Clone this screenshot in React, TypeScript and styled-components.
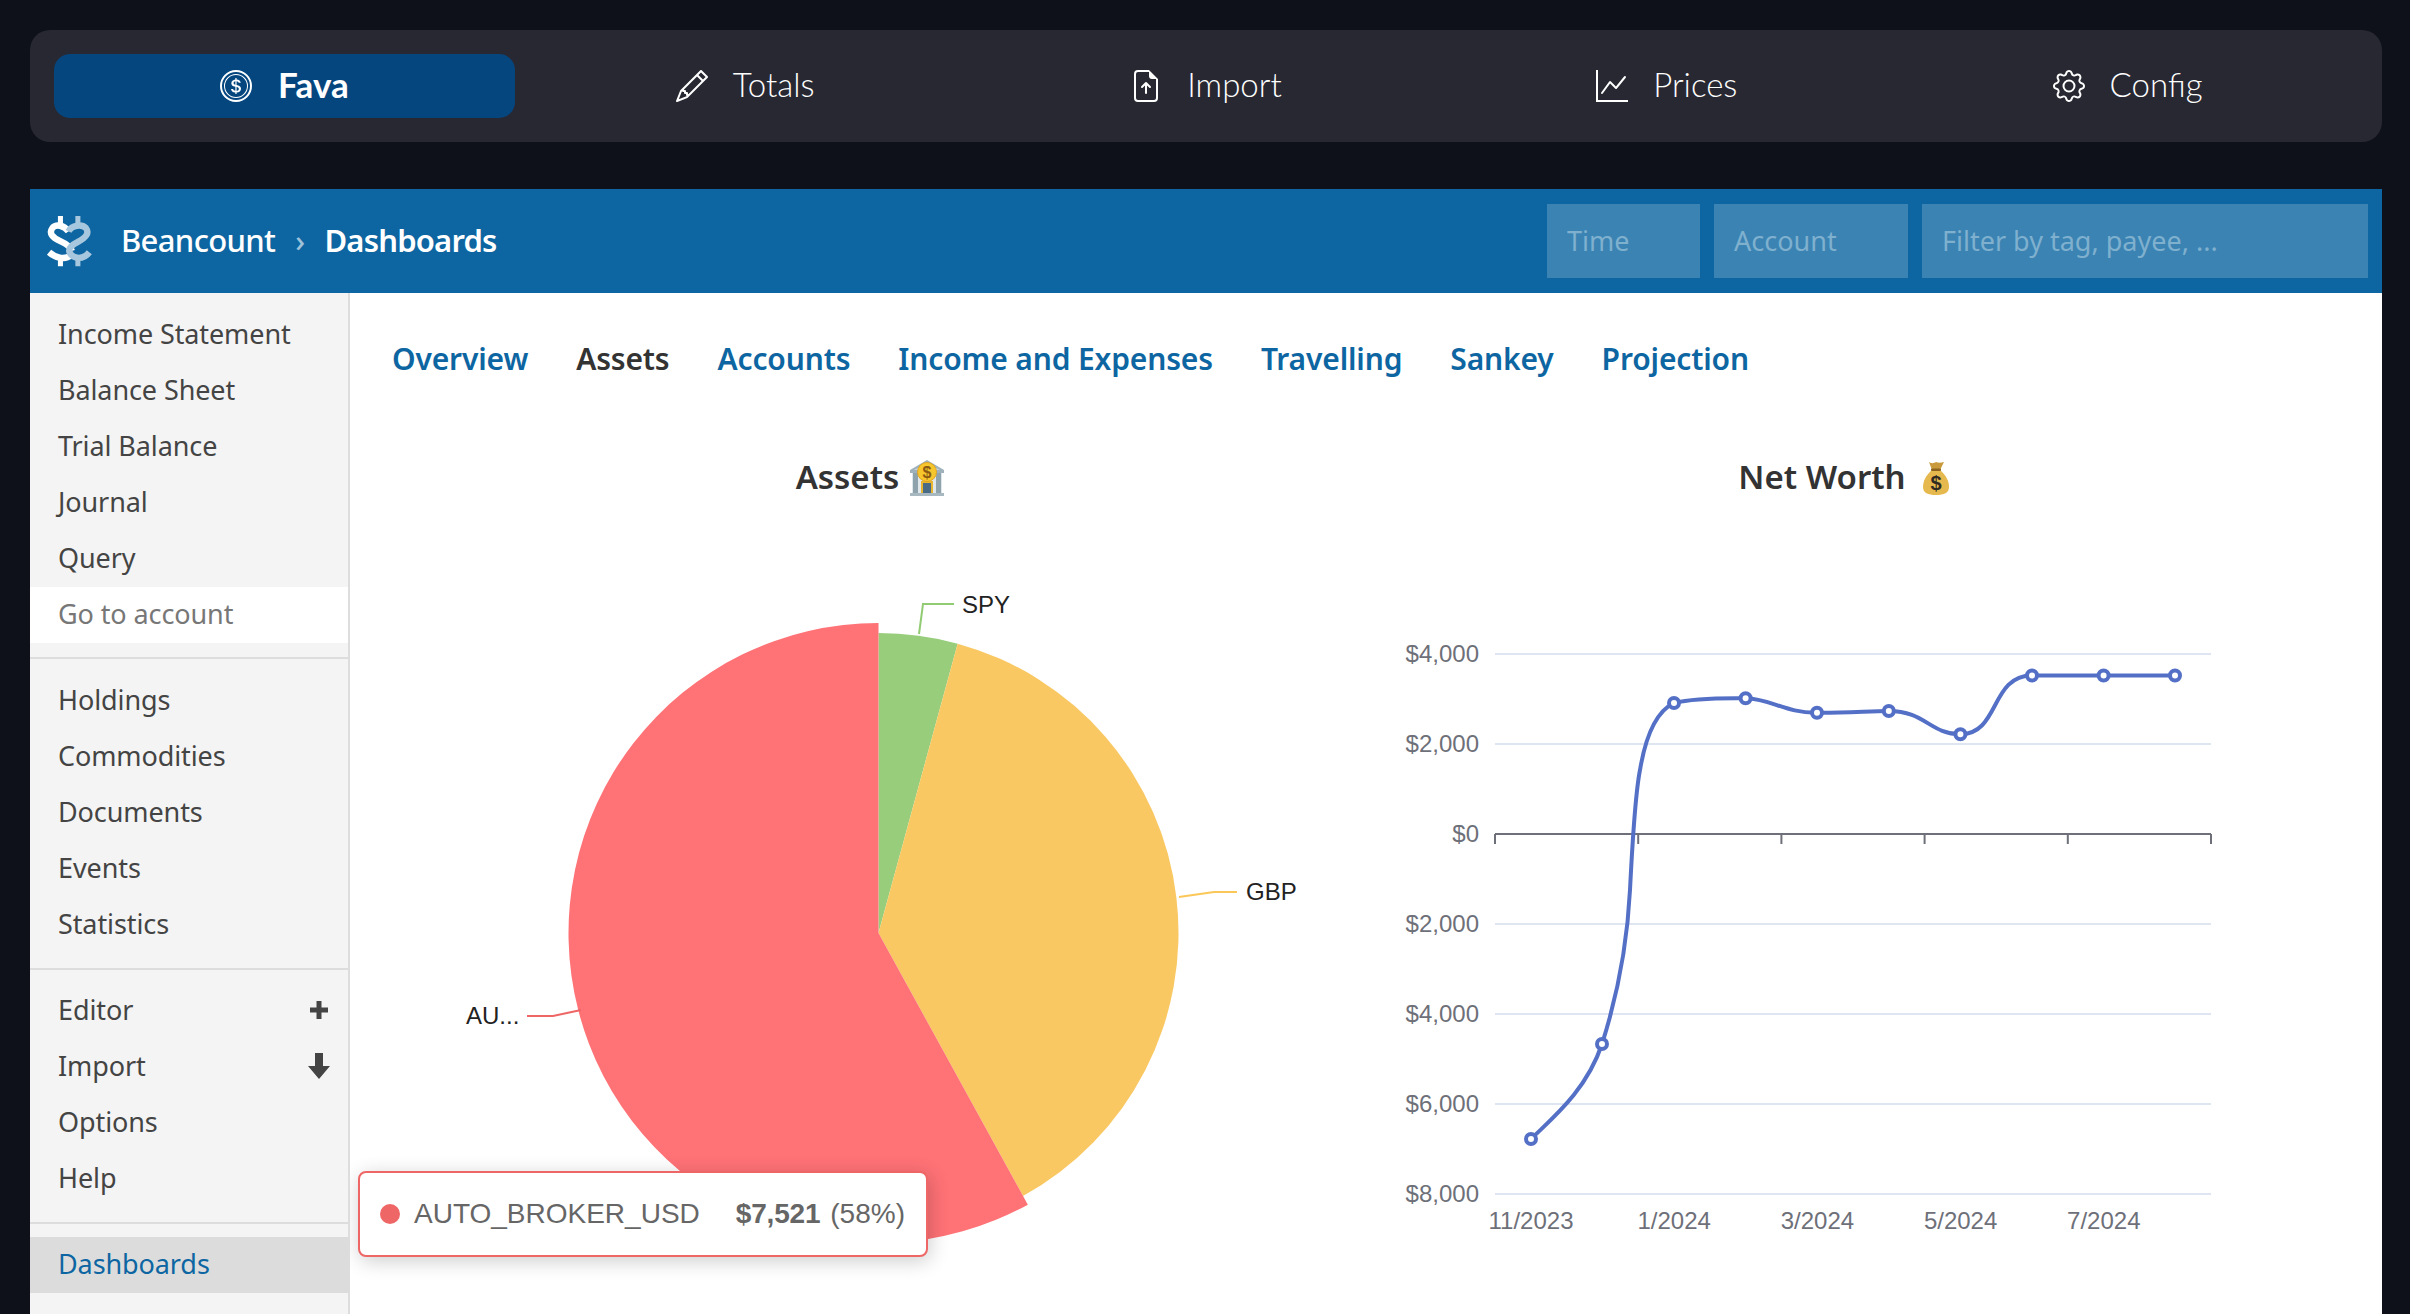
import { FC } from "react";
import styled, { createGlobalStyle } from "styled-components";
import { BsCoin, BsPencil, BsFileEarmarkArrowUp, BsGraphUp, BsGear } from "react-icons/bs";

const UI_FONT = '"Noto Sans", "Open Sans", sans-serif';
const CHART_FONT = '"Liberation Sans", Arial, sans-serif';
const BLUE = "#0d66a2";

const GlobalStyle = createGlobalStyle`
  html, body {
    margin: 0;
    height: 100%;
    overflow: hidden;
    background: #0e1119;
  }
  #root {
    height: 100%;
  }
`;

const Page = styled.div`
  height: 1314px;
  padding: 30px 28px 0 30px;
  box-sizing: border-box;
  display: flex;
  flex-direction: column;
  overflow: hidden;
`;

const TopNav = styled.nav`
  display: grid;
  grid-template-columns: repeat(5, 1fr);
  padding: 24px;
  height: 112px;
  box-sizing: border-box;
  background: #282832;
  border-radius: 20px;
  flex: none;
`;

const NavItem = styled.div<{ $active?: boolean }>`
  display: flex;
  align-items: center;
  justify-content: center;
  gap: ${(props) => (props.$active ? "26px" : "25px")};
  height: 64px;
  border-radius: 16px;
  color: #fff;
  font-family: Lato, sans-serif;
  font-size: ${(props) => (props.$active ? "35px" : "33px")};
  font-weight: ${(props) => (props.$active ? 700 : 300)};
  background: ${(props) => (props.$active ? "#05467f" : "transparent")};
  > span {
    position: relative;
    top: -2px;
  }
  > svg {
    width: 32px;
    height: 32px;
    flex: none;
  }
`;

const Shell = styled.div`
  margin-top: 47px;
  flex: 1;
  display: flex;
  flex-direction: column;
  min-height: 0;
  background: #fff;
`;

const Banner = styled.header`
  height: 104px;
  flex: none;
  display: flex;
  align-items: center;
  padding: 0 14px 0 16px;
  background: ${BLUE};
  font-family: ${UI_FONT};
  color: #fff;
`;

const Crumbs = styled.div`
  display: flex;
  align-items: center;
  margin-left: 28px;
  padding-bottom: 2px;
  font-size: 31px;
  font-weight: 500;
  letter-spacing: -0.65px;
  flex: 1;
`;

const Chevron = styled.span`
  margin: 0 20px;
  color: #9fc2da;
  font-size: 30px;
`;

const CurrentCrumb = styled.span`
  font-weight: 600;
  letter-spacing: -0.8px;
`;

const FilterBox = styled.div<{ $width: number }>`
  width: ${(props) => props.$width}px;
  height: 74px;
  margin-left: 14px;
  padding: 0 0 2px 20px;
  box-sizing: border-box;
  display: flex;
  align-items: center;
  background: #3b83b3;
  color: #7fb0ce;
  font-size: 27px;
`;

const Body = styled.div`
  flex: 1;
  display: flex;
  min-height: 0;
`;

const Sidebar = styled.aside`
  width: 320px;
  flex: none;
  box-sizing: border-box;
  background: #f4f4f4;
  border-right: 2px solid #ddd;
  font-family: ${UI_FONT};
  font-size: 27px;
  color: #444;
`;

const SideGroup = styled.ul<{ $top: number; $bottom: number }>`
  margin: 0;
  list-style: none;
  padding: ${(props) => props.$top}px 0 ${(props) => props.$bottom}px;
  border-bottom: 2px solid #ddd;
  &:last-child {
    border-bottom: none;
  }
`;

const SideRow = styled.li<{ $variant?: "input" | "current" }>`
  height: 56px;
  box-sizing: border-box;
  display: flex;
  align-items: center;
  justify-content: space-between;
  padding: 0 16px 4px 28px;
  letter-spacing: -0.1px;
  background: ${(props) =>
    props.$variant === "input" ? "#fff" : props.$variant === "current" ? "#dcdcdc" : "transparent"};
  color: ${(props) =>
    props.$variant === "input" ? "#777" : props.$variant === "current" ? BLUE : "inherit"};
  margin-right: ${(props) => (props.$variant === "current" ? "-2px" : "0")};
`;

const RowIcon = styled.svg`
  width: 26px;
  height: 30px;
  fill: #444;
  flex: none;
  position: relative;
  top: 1px;
`;

const Content = styled.main`
  flex: 1;
  min-width: 0;
  padding: 45px 0 0 34px;
  overflow: hidden;
`;

const Tabs = styled.div`
  display: flex;
  gap: 48px;
  height: 40px;
  align-items: center;
  padding-left: 8px;
  font-family: ${UI_FONT};
  font-size: 30px;
  font-weight: 600;
  letter-spacing: -0.15px;
`;

const Tab = styled.a<{ $active?: boolean }>`
  color: ${(props) => (props.$active ? "#333" : BLUE)};
`;

const Charts = styled.div`
  display: grid;
  grid-template-columns: 973px 973px;
  margin-top: 78px;
`;

const ChartPanel = styled.section`
  position: relative;
`;

const ChartTitle = styled.h3`
  margin: 0;
  height: 40px;
  display: flex;
  align-items: center;
  justify-content: center;
  font-family: ${UI_FONT};
  font-size: 33px;
  font-weight: 600;
  color: #333;
`;

const TitleEmoji = styled.svg<{ $gap: number }>`
  margin-left: ${(props) => props.$gap}px;
  flex: none;
  position: relative;
  top: 2px;
`;

const ChartCanvas = styled.svg`
  display: block;
  margin-top: 34px;
  width: 973px;
  height: 784px;
  font-family: ${CHART_FONT};
  font-size: 24px;
`;

const Tooltip = styled.div`
  position: absolute;
  left: -26px;
  top: 715px;
  width: 570px;
  height: 86px;
  box-sizing: border-box;
  display: flex;
  align-items: center;
  padding: 0 21px 0 20px;
  background: #fff;
  border: 2px solid #ee6666;
  border-radius: 8px;
  box-shadow: 2px 4px 20px rgba(0, 0, 0, 0.2);
  font-family: ${CHART_FONT};
  font-size: 28px;
  color: #666;
`;

const TooltipDot = styled.span`
  width: 20px;
  height: 20px;
  border-radius: 50%;
  background: #ee6666;
  margin-right: 14px;
  flex: none;
`;

const TooltipName = styled.span`
  flex: 1;
`;

const TooltipValue = styled.b`
  margin-right: 10px;
  letter-spacing: -0.2px;
`;

const polar = (r: number, deg: number) => {
  const a = (deg * Math.PI) / 180;
  return [878.5 + r * Math.sin(a), 933 - r * Math.cos(a)];
};

const slice = (r: number, from: number, to: number) => {
  const [x1, y1] = polar(r, from);
  const [x2, y2] = polar(r, to);
  return `M878.5 933L${x1} ${y1}A${r} ${r} 0 ${to - from > 180 ? 1 : 0} 1 ${x2} ${y2}Z`;
};

const Logo: FC = () => (
  <svg width="47" height="52" viewBox="75 75 140 155" fill="none" strokeWidth="19">
    <g stroke="#fff">
      <path strokeWidth="15" d="M118 78V104M118 206V228" />
      <path d="M142 124C128 104 104 102 94 114C82 130 96 143 116 152C134 160 148 168 152 182" />
      <path d="M84 186C100 200 130 212 150 194" />
    </g>
    <g stroke="#a6c7dd">
      <path strokeWidth="15" d="M170 78V104M170 206V228" />
      <path d="M142 124C152 104 182 102 194 114C206 130 192 143 170 155C150 165 140 176 146 188C156 206 186 210 204 186" />
    </g>
  </svg>
);

const BankEmoji: FC = () => (
  <TitleEmoji $gap={10} width="36" height="38" viewBox="0 0 36 38">
    <path d="M1 11L18 1L35 11V14H1Z" fill="#9fb1bb" />
    <path d="M5 11L18 4L31 11Z" fill="#c9d6dc" />
    <rect x="3" y="14" width="30" height="20" fill="#dfe7ea" />
    <g fill="#8fa3ad">
      <rect x="4" y="14" width="5" height="20" />
      <rect x="27" y="14" width="5" height="20" />
    </g>
    <rect x="12" y="22" width="12" height="12" fill="#e8b52f" />
    <rect x="14" y="24" width="8" height="10" fill="#4a6b86" />
    <rect x="1" y="34" width="34" height="3" fill="#a8b8c0" />
    <circle cx="18" cy="13" r="9.5" fill="#f7c62d" stroke="#e0a422" />
    <text x="18" y="19" fontSize="16" fontWeight="700" fontFamily={CHART_FONT} textAnchor="middle" fill="#8a5a12">
      $
    </text>
  </TitleEmoji>
);

const BagEmoji: FC = () => (
  <TitleEmoji $gap={17} width="26" height="35" viewBox="0 0 26 35">
    <path d="M6 1C9 3 11 2 13 1C15 2 18 2 21 1L17 9H9Z" fill="#c99a3c" />
    <path d="M9 9C3 14 0 20 0 26C0 32 5 34 13 34C21 34 26 32 26 26C26 20 23 14 17 9Z" fill="#e6b94f" />
    <rect x="8" y="7.5" width="10" height="2.5" rx="1" fill="#8c6420" />
    <text x="13" y="29" fontSize="20" fontWeight="700" fontFamily={CHART_FONT} textAnchor="middle" fill="#2f2a22">
      $
    </text>
  </TitleEmoji>
);

const PieChart: FC = () => (
  <ChartCanvas viewBox="384 530 973 784">
    <path d={slice(300, 0, 15.3)} fill="#97cd7b" />
    <path d={slice(300, 15.3, 151.2)} fill="#f9c863" />
    <path d={slice(310, 151.2, 360)} fill="#ff7276" />
    <path d="M919 634L923 604H954" fill="none" stroke="#91cc75" strokeWidth="2" />
    <path d="M1179 897L1214 892H1237" fill="none" stroke="#fac858" strokeWidth="2" />
    <path d="M581 1010L553 1016H527" fill="none" stroke="#ee6666" strokeWidth="2" />
    <text x="962" y="613" fill="#222">SPY</text>
    <text x="1246" y="900" fill="#222">GBP</text>
    <text x="466" y="1024" fill="#222">AU...</text>
  </ChartCanvas>
);

const yLabels = ["$4,000", "$2,000", "$0", "$2,000", "$4,000", "$6,000", "$8,000"];
const xLabels = ["11/2023", "1/2024", "3/2024", "5/2024", "7/2024"];
const tickX = [1495, 1638.2, 1781.4, 1924.6, 2067.8, 2211];
const pointsXY = [
  [1531, 1139],
  [1602, 1044],
  [1674, 703],
  [1745.6, 698.3],
  [1817, 712.7],
  [1888.8, 711],
  [1960.4, 734.3],
  [2032, 675.5],
  [2103.6, 675.5],
  [2175, 675.5],
];

const LineChart: FC = () => (
  <ChartCanvas viewBox="1357 530 973 784">
    {yLabels.map((label, i) => {
      const y = 654 + i * 90;
      return (
        <g key={i}>
          {i !== 2 && <path d={`M1495 ${y}H2211`} stroke="#e0e6f1" strokeWidth="2" />}
          <text x="1479" y={y + 8} textAnchor="end" fill="#6e7079">
            {label}
          </text>
        </g>
      );
    })}
    <path d="M1495 834H2211" stroke="#6e7079" strokeWidth="2" />
    {tickX.map((x) => (
      <path key={x} d={`M${x} 834V844`} stroke="#6e7079" strokeWidth="2" />
    ))}
    {xLabels.map((label, i) => (
      <text key={label} x={1531 + i * 143.2} y="1229" textAnchor="middle" fill="#6e7079">
        {label}
      </text>
    ))}
    <path
      d="M1531 1139C1550 1120 1586 1092 1602 1044C1616 1000 1627 950 1630 890C1632 850 1636 790 1640 770C1645 740 1655 712 1674 703C1690 699 1720 698 1745.6 698.3C1772 699 1785 713 1817 712.7C1840 713 1865 711.5 1888.8 711C1925 711 1930 734 1960.4 734.3C2000 734 1990 675.5 2032 675.5H2175"
      fill="none"
      stroke="#5470c6"
      strokeWidth="4"
    />
    {pointsXY.map(([x, y]) => (
      <circle key={x} cx={x} cy={y} r="5" fill="#fff" stroke="#5470c6" strokeWidth="4" />
    ))}
  </ChartCanvas>
);

const App: FC = () => (
  <Page>
    <GlobalStyle />
    <TopNav>
      <NavItem $active>
        <BsCoin />
        <span>Fava</span>
      </NavItem>
      <NavItem>
        <BsPencil />
        <span>Totals</span>
      </NavItem>
      <NavItem>
        <BsFileEarmarkArrowUp />
        <span>Import</span>
      </NavItem>
      <NavItem>
        <BsGraphUp />
        <span>Prices</span>
      </NavItem>
      <NavItem>
        <BsGear />
        <span>Config</span>
      </NavItem>
    </TopNav>
    <Shell>
      <Banner>
        <Logo />
        <Crumbs>
          Beancount
          <Chevron>›</Chevron>
          <CurrentCrumb>Dashboards</CurrentCrumb>
        </Crumbs>
        <FilterBox $width={153}>Time</FilterBox>
        <FilterBox $width={194}>Account</FilterBox>
        <FilterBox $width={446}>Filter by tag, payee, ...</FilterBox>
      </Banner>
      <Body>
        <Sidebar>
          <SideGroup $top={14} $bottom={14}>
            <SideRow>Income Statement</SideRow>
            <SideRow>Balance Sheet</SideRow>
            <SideRow>Trial Balance</SideRow>
            <SideRow>Journal</SideRow>
            <SideRow>Query</SideRow>
            <SideRow $variant="input">Go to account</SideRow>
          </SideGroup>
          <SideGroup $top={14} $bottom={15}>
            <SideRow>Holdings</SideRow>
            <SideRow>Commodities</SideRow>
            <SideRow>Documents</SideRow>
            <SideRow>Events</SideRow>
            <SideRow>Statistics</SideRow>
          </SideGroup>
          <SideGroup $top={13} $bottom={15}>
            <SideRow>
              Editor
              <RowIcon viewBox="0 0 26 30">
                <path d="M10.5 6H15.5V12.5H22V17.5H15.5V24H10.5V17.5H4V12.5H10.5Z" />
              </RowIcon>
            </SideRow>
            <SideRow>
              Import
              <RowIcon viewBox="0 0 26 30">
                <path d="M9 2H17V15H24L13 28L2 15H9Z" />
              </RowIcon>
            </SideRow>
            <SideRow>Options</SideRow>
            <SideRow>Help</SideRow>
          </SideGroup>
          <SideGroup $top={13} $bottom={0}>
            <SideRow $variant="current">Dashboards</SideRow>
          </SideGroup>
        </Sidebar>
        <Content>
          <Tabs>
            <Tab>Overview</Tab>
            <Tab $active>Assets</Tab>
            <Tab>Accounts</Tab>
            <Tab>Income and Expenses</Tab>
            <Tab>Travelling</Tab>
            <Tab>Sankey</Tab>
            <Tab>Projection</Tab>
          </Tabs>
          <Charts>
            <ChartPanel>
              <ChartTitle>
                Assets
                <BankEmoji />
              </ChartTitle>
              <PieChart />
              <Tooltip>
                <TooltipDot />
                <TooltipName>AUTO_BROKER_USD</TooltipName>
                <TooltipValue>$7,521</TooltipValue>
                (58%)
              </Tooltip>
            </ChartPanel>
            <ChartPanel>
              <ChartTitle>
                Net Worth
                <BagEmoji />
              </ChartTitle>
              <LineChart />
            </ChartPanel>
          </Charts>
        </Content>
      </Body>
    </Shell>
  </Page>
);

export default App;
